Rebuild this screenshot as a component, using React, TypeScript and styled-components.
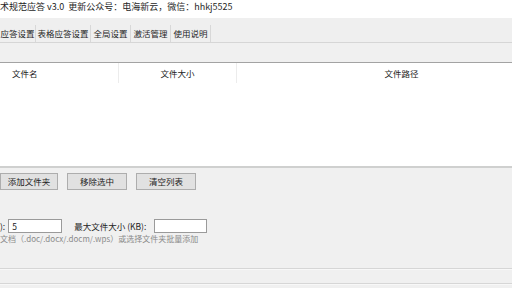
import React from 'react';
import styled, { createGlobalStyle } from 'styled-components';

const GlobalStyle = createGlobalStyle`
  html, body {
    margin: 0;
    padding: 0;
    background: #f0f0f0;
  }
  body {
    font-family: "Noto Sans CJK SC", "Liberation Sans", sans-serif;
    color: #222;
  }
`;

const Window = styled.div`
  width: 512px;
  height: 288px;
  overflow: hidden;
  background: #f0f0f0;
  display: flex;
  flex-direction: column;
`;

const TitleBar = styled.div`
  height: 18px;
  background: #fff;
  font-size: 9px;
  line-height: 14px;
  white-space: nowrap;
  color: #1e1e1e;
`;

const TabBar = styled.div`
  padding-top: 8px;
  box-sizing: border-box;
  height: 25px;
  display: flex;
  align-items: flex-end;
  background: #efefef;
  border-bottom: 1px solid #d6d6d6;
`;

const Tab = styled.div<{ $w: number }>`
  width: ${p => p.$w}px;
  height: 17px;
  line-height: 17px;
  text-align: center;
  font-size: 8.5px;
  white-space: nowrap;
  border-right: 1px solid #d8d8d8;
  box-sizing: border-box;
  color: #1e1e1e;
`;

const Spacer = styled.div`
  height: 19px;
`;

const FileTable = styled.div`
  height: 103px;
  background: #fff;
  border-top: 1px solid #a3a3a3;
  border-bottom: 2px solid #cfd0cf;
  overflow: hidden;
`;

const HeaderRow = styled.div`
  display: grid;
  grid-template-columns: 119px 118px 330px;
  height: 20px;
`;

const HeaderCell = styled.div<{ $left?: boolean }>`
  font-size: 8.5px;
  line-height: 20px;
  text-align: ${p => (p.$left ? 'left' : 'center')};
  padding-left: ${p => (p.$left ? '12px' : '0')};
  border-right: 1px solid #ececec;
  white-space: nowrap;
  color: #222;
`;

const ButtonRow = styled.div`
  display: flex;
  gap: 9px;
  margin-top: 5px;
  height: 17px;
`;

const Button = styled.button<{ $w: number }>`
  width: ${p => p.$w}px;
  height: 17px;
  padding: 0;
  margin: 0;
  background: #e1e1e1;
  border: 1px solid #adadad;
  font-family: inherit;
  font-size: 8.5px;
  line-height: 15px;
  color: #222;
  white-space: nowrap;
`;

const FormRow = styled.div`
  display: flex;
  align-items: center;
  margin-top: 29px;
  height: 14px;
  font-size: 8.5px;
  white-space: nowrap;
`;

const Label = styled.span<{ $ml?: number; $mr?: number }>`
  margin-left: ${p => p.$ml ?? 0}px;
  margin-right: ${p => p.$mr ?? 2}px;
  color: #222;
`;

const Input = styled.div<{ $w: number }>`
  width: ${p => p.$w}px;
  height: 14px;
  box-sizing: border-box;
  background: #fff;
  border: 1px solid #9a9a9a;
  padding-left: 3px;
  font-size: 8.5px;
  line-height: 12px;
  color: #222;
`;

const Hint = styled.div`
  margin-top: 1px;
  font-size: 8px;
  line-height: 10px;
  color: #8a8a8a;
  white-space: nowrap;
`;

const StatusLine = styled.div<{ $mt: number }>`
  margin-top: ${p => p.$mt}px;
  border-top: 1px solid #d6d6d6;
  border-bottom: 1px solid #f8f8f8;
`;

const tabs = [
  { label: '应答设置', w: 36 },
  { label: '表格应答设置', w: 55 },
  { label: '全局设置', w: 40 },
  { label: '激活管理', w: 40 },
  { label: '使用说明', w: 40 },
];

export default function App() {
  return (
    <>
      <GlobalStyle />
      <Window>
        <TitleBar>术规范应答 v3.0&nbsp;&nbsp;更新公众号：电海新云，微信：hhkj5525</TitleBar>
        <TabBar>
          {tabs.map(t => (
            <Tab key={t.label} $w={t.w}>{t.label}</Tab>
          ))}
        </TabBar>
        <Spacer />
        <FileTable>
          <HeaderRow>
            <HeaderCell $left>文件名</HeaderCell>
            <HeaderCell>文件大小</HeaderCell>
            <HeaderCell>文件路径</HeaderCell>
          </HeaderRow>
        </FileTable>
        <ButtonRow>
          <Button $w={58}>添加文件夹</Button>
          <Button $w={60}>移除选中</Button>
          <Button $w={60}>清空列表</Button>
        </ButtonRow>
        <FormRow>
          <Label $mr={3}>):</Label>
          <Input $w={54}>5</Input>
          <Label $ml={12} $mr={8}>最大文件大小 (KB):</Label>
          <Input $w={53} />
        </FormRow>
        <Hint>文档（.doc/.docx/.docm/.wps）或选择文件夹批量添加</Hint>
        <StatusLine $mt={24} />
        <StatusLine $mt={13} />
      </Window>
    </>
  );
}
